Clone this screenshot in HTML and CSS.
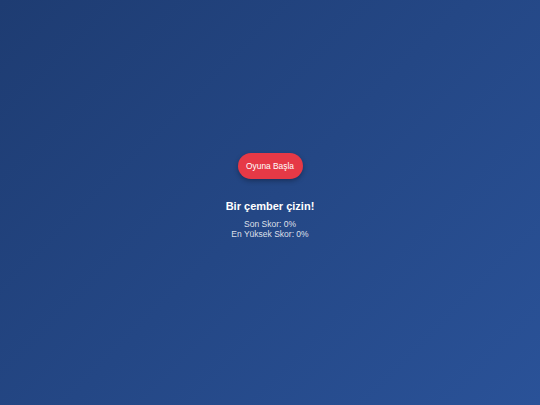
FILE: index.html
```html
<!DOCTYPE html>
<html lang="tr">
<head>
<meta charset="utf-8">
<title>Çember Çiz</title>
<link rel="stylesheet" href="styles.css">
</head>
<body>
<main class="screen">
  <button class="start-btn">Oyuna Başla</button>
  <h1 class="title">Bir çember çizin!</h1>
  <div class="scores">
    <div class="score-line">Son Skor: 0%</div>
    <div class="score-line">En Yüksek Skor: 0%</div>
  </div>
</main>
</body>
</html>
```

FILE: styles.css
```css
html, body {
  margin: 0;
  padding: 0;
  height: 100%;
}
body {
  background: linear-gradient(135deg, #1e3c72 0%, #2a5298 100%);
  font-family: "Liberation Sans", Arial, sans-serif;
  color: #fff;
  overflow: hidden;
}
.screen {
  box-sizing: border-box;
  height: 405px;
  display: flex;
  flex-direction: column;
  align-items: center;
  justify-content: center;
  padding-bottom: 13px;
}
.start-btn {
  font-family: "Liberation Sans", Arial, sans-serif;
  font-size: 8.4px;
  line-height: 10px;
  color: #fff;
  background: #e63946;
  border: none;
  border-radius: 13px;
  width: 65px;
  height: 26px;
  padding: 0;
  box-shadow: 0 2px 5px rgba(0, 0, 0, 0.3);
  cursor: pointer;
}
.title {
  margin: 21px 0 0;
  font-size: 11px;
  line-height: 12.6px;
  font-weight: bold;
}
.scores {
  margin-top: 7px;
  text-align: center;
  font-size: 8.5px;
  line-height: 10px;
  color: rgba(255, 255, 255, 0.85);
}
```
